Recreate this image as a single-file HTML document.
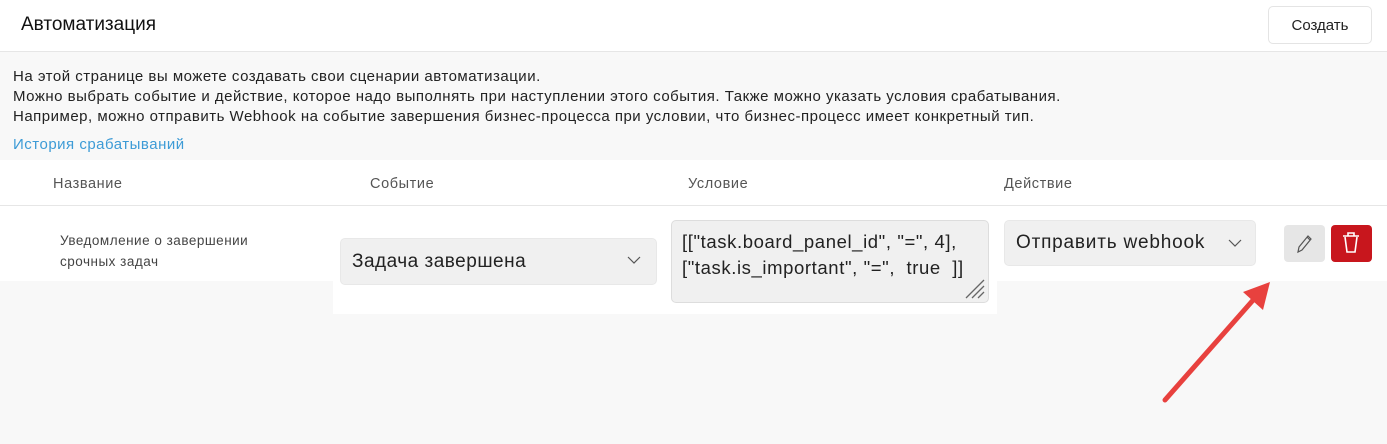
<!DOCTYPE html>
<html><head><meta charset="utf-8"><style>
*{box-sizing:border-box;margin:0;padding:0}
body{width:1387px;height:444px;background:#f8f8f8;font-family:"Liberation Sans",sans-serif;color:#222;position:relative;overflow:hidden}
.a{position:absolute}
.hdr{left:0;top:0;width:1387px;height:52px;background:#fff;border-bottom:1px solid #e6e6e6}
.t{font-size:15px;line-height:20px;color:#222;white-space:nowrap;letter-spacing:0.5px}
.th{font-size:14.5px;color:#555;letter-spacing:0.6px}
.sel{background:#f0f0f0;border-radius:5px;border:1px solid #e8e8e8}
</style></head><body>
<div class="a hdr"></div>
<div class="a" style="left:21px;top:14px;font-size:19px;color:#111">Автоматизация</div>
<div class="a" style="left:1268px;top:6px;width:104px;height:38px;border:1px solid #e4e4e4;border-radius:5px;background:#fff;font-size:15px;text-align:center;line-height:37px;color:#222">Создать</div>
<div class="a t" style="left:13px;top:67px">На этой странице вы можете создавать свои сценарии автоматизации.</div>
<div class="a t" style="left:13px;top:87px">Можно выбрать событие и действие, которое надо выполнять при наступлении этого события. Также можно указать условия срабатывания.</div>
<div class="a t" style="left:13px;top:107px">Например, можно отправить Webhook на событие завершения бизнес-процесса при условии, что бизнес-процесс имеет конкретный тип.</div>
<div class="a t" style="left:13px;top:135px;color:#3d9bd6">История срабатываний</div>
<div class="a" style="left:0;top:160px;width:1387px;height:121px;background:#fff"></div>
<div class="a" style="left:333px;top:281px;width:664px;height:33px;background:#fff"></div>
<div class="a" style="left:0;top:205px;width:1387px;height:1px;background:#e6e6e6"></div>
<div class="a th" style="left:53px;top:176px">Название</div>
<div class="a th" style="left:370px;top:176px">Событие</div>
<div class="a th" style="left:688px;top:176px">Условие</div>
<div class="a th" style="left:1004px;top:176px">Действие</div>
<div class="a" style="left:60px;top:230px;font-size:13.5px;line-height:21px;color:#444;letter-spacing:0.5px">Уведомление о завершении<br>срочных задач</div>
<div class="a sel" style="left:340px;top:238px;width:317px;height:47px"></div>
<div class="a" style="left:352px;top:251px;font-size:19px;color:#222;letter-spacing:0.5px">Задача завершена</div>
<svg class="a" style="left:627px;top:256px" width="14" height="9"><path d="M1 1L7 7L13 1" stroke="#555" fill="none" stroke-width="1.2"/></svg>
<div class="a sel" style="left:671px;top:220px;width:318px;height:83px;border-color:#ddd"></div>
<div class="a" style="left:682px;top:229px;font-size:18.5px;line-height:26px;color:#222;white-space:nowrap;letter-spacing:0.6px">[["task.board_panel_id", "=", 4],<br>["task.is_important", "=",&nbsp; true&nbsp; ]]</div>
<svg class="a" style="left:964px;top:278px" width="22" height="22"><path d="M20 2L2 20M20 8L8 20M20 14L14 20" stroke="#666" stroke-width="1.3"/></svg>
<div class="a sel" style="left:1004px;top:220px;width:252px;height:46px"></div>
<div class="a" style="left:1016px;top:232px;font-size:19px;color:#222;letter-spacing:0.8px">Отправить webhook</div>
<svg class="a" style="left:1228px;top:239px" width="14" height="9"><path d="M1 1L7 7L13 1" stroke="#555" fill="none" stroke-width="1.2"/></svg>
<div class="a" style="left:1284px;top:225px;width:41px;height:37px;background:#e6e6e6;border-radius:4px"></div>
<svg class="a" style="left:1294px;top:233px" width="20" height="22"><path d="M4 19L5 14L14 3L17 6L8 17Z M13 4L16 7" stroke="#555" fill="none" stroke-width="1.2"/></svg>
<div class="a" style="left:1331px;top:225px;width:41px;height:37px;background:#c8161d;border-radius:4px"></div>
<svg class="a" style="left:1341px;top:231px" width="20" height="24"><path d="M2 5H18M7 5V2H13V5M4 6L6 21H14L16 6" stroke="#fff" fill="none" stroke-width="1.6"/></svg>
<svg class="a" style="left:1150px;top:270px" width="130" height="140"><path d="M15 130L112 20" stroke="#e8413e" stroke-width="5" stroke-linecap="round"/><path d="M120 12L93 22L113 40Z" fill="#e8413e"/></svg>
</body></html>
